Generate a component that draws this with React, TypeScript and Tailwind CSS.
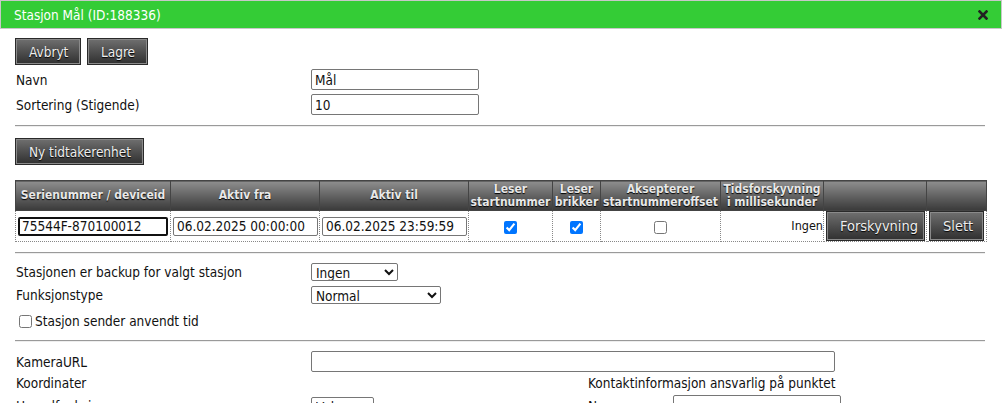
import React from "react";

const font = { fontFamily: '"DejaVu Sans Condensed", "DejaVu Sans", sans-serif' };

function Btn({ children, className = "" }: { children: React.ReactNode; className?: string }) {
  return (
    <button
      className={
        "h-[27px] whitespace-nowrap border border-[#2a2a2a] bg-gradient-to-b from-[#707070] to-[#303030] px-[13px] text-[13.5px] leading-[16px] text-[#eeeeee] [text-shadow:0_1px_1px_#000] shadow-[inset_0_0_0_1px_#8a8a8a] " +
        className
      }
    >
      {children}
    </button>
  );
}

function Hr() {
  return <div className="h-0 border-t border-b border-t-[#9a9a9a] border-b-[#eeeeee] mr-[2px]" />;
}

const th =
  "border border-[#444] bg-gradient-to-b from-[#8e8e8e] to-[#3a3a3a] px-[1px] text-center align-middle text-[12px] font-bold leading-[13px] text-[#e8e8e8] [text-shadow:0_1px_1px_#000] whitespace-nowrap";
const td = "border border-dotted border-[#888] px-[2px] py-0 align-middle leading-[16px]";

export default function App() {
  return (
    <div className="w-[1002px] h-[403px] overflow-hidden bg-white text-[13.5px] leading-[18px] text-[#111]" style={font}>
      <div className="flex h-[29px] items-center justify-between border border-[#c8c8c8] bg-[#34cc36] pl-[13px] pr-[13px]">
        <span className="text-[13.5px] text-white">Stasjon Mål (ID:188336)</span>
        <svg width="10" height="10" viewBox="0 0 10 10" className="mt-[1px]">
          <path d="M1.5 1.5 L8.5 8.5 M8.5 1.5 L1.5 8.5" stroke="#222" strokeWidth="2.6" strokeLinecap="square" />
        </svg>
      </div>

      <div className="pl-[15px] pr-[15px]">
        <div className="mt-[9px] flex gap-[6px]">
          <Btn className="w-[66px] px-0">Avbryt</Btn>
          <Btn className="w-[61px] px-0">Lagre</Btn>
        </div>

        <div className="mt-[4px] flex flex-col gap-[4px]">
          <div className="flex h-[21px] items-center">
            <div className="w-[296px] pl-[1px]">Navn</div>
            <input
              defaultValue="Mål"
              className="h-[21px] w-[168px] rounded-[2px] border border-[#767676] px-[3px] text-[13.5px]"
            />
          </div>
          <div className="flex h-[21px] items-center">
            <div className="w-[296px] pl-[1px]">Sortering (Stigende)</div>
            <input
              defaultValue="10"
              className="h-[21px] w-[168px] rounded-[2px] border border-[#767676] px-[3px] text-[13.5px]"
            />
          </div>
        </div>

        <div className="mt-[10px]">
          <Hr />
        </div>

        <div className="mt-[11px]">
          <Btn className="w-[129px] px-0">Ny tidtakerenhet</Btn>
        </div>

        <table className="mt-[15px] w-[971px] table-fixed border-collapse">
          <colgroup>
            <col className="w-[155px]" />
            <col className="w-[149px]" />
            <col className="w-[149px]" />
            <col className="w-[84px]" />
            <col className="w-[48px]" />
            <col className="w-[120px]" />
            <col className="w-[103px]" />
            <col className="w-[103px]" />
            <col className="w-[60px]" />
          </colgroup>
          <thead>
            <tr className="h-[30px]">
              <th className={th}>Serienummer / deviceid</th>
              <th className={th}>Aktiv fra</th>
              <th className={th}>Aktiv til</th>
              <th className={th}>
                Leser
                <br />
                startnummer
              </th>
              <th className={th}>
                Leser
                <br />
                brikker
              </th>
              <th className={th}>
                Aksepterer
                <br />
                startnummeroffset
              </th>
              <th className={th}>
                Tidsforskyvning
                <br />i millisekunder
              </th>
              <th className={th}></th>
              <th className={th}></th>
            </tr>
          </thead>
          <tbody>
            <tr className="h-[31px]">
              <td className={td}>
                <input
                  defaultValue="75544F-870100012"
                  className="block h-[19px] w-[150px] rounded-[2px] border-2 border-[#111] px-[2px] text-[13.5px] outline-none"
                />
              </td>
              <td className={td}>
                <input
                  defaultValue="06.02.2025 00:00:00"
                  className="block h-[19px] w-[145px] rounded-[2px] border border-[#767676] px-[3px] text-[13.5px]"
                />
              </td>
              <td className={td}>
                <input
                  defaultValue="06.02.2025 23:59:59"
                  className="block h-[19px] w-[145px] rounded-[2px] border border-[#767676] px-[3px] text-[13.5px]"
                />
              </td>
              <td className={td + " text-center"}>
                <input type="checkbox" defaultChecked className="m-0 h-[13px] w-[13px] align-middle" />
              </td>
              <td className={td + " text-center"}>
                <input type="checkbox" defaultChecked className="m-0 h-[13px] w-[13px] align-middle" />
              </td>
              <td className={td + " text-center"}>
                <input type="checkbox" className="m-0 h-[13px] w-[13px] align-middle" />
              </td>
              <td className={td + " text-right text-[12.5px] pr-0"}>Ingen</td>
              <td className={td + " px-[1px] py-0"}>
                <Btn className="block h-[30px] w-[99px] px-0 text-[14.5px]">Forskyvning</Btn>
              </td>
              <td className={td + " px-[1px] py-0"}>
                <Btn className="block h-[30px] w-[55px] px-0 text-[14.5px]">Slett</Btn>
              </td>
            </tr>
          </tbody>
        </table>

        <div className="mt-[10px]">
          <Hr />
        </div>

        <div className="mt-[9px] flex flex-col">
          <div className="flex h-[18px] items-center">
            <div className="w-[296px] pl-[1px]">Stasjonen er backup for valgt stasjon</div>
            <select className="h-[18px] w-[87px] rounded-[2px] border border-[#767676] text-[13.5px] leading-[16px]">
              <option>Ingen</option>
            </select>
          </div>
          <div className="mt-[5px] flex h-[18px] items-center">
            <div className="w-[296px] pl-[1px]">Funksjonstype</div>
            <select className="h-[18px] w-[130px] rounded-[2px] border border-[#767676] text-[13.5px] leading-[16px]">
              <option>Normal</option>
            </select>
          </div>
          <label className="mt-[8px] flex h-[18px] items-center gap-[3px] pl-[4px]">
            <input type="checkbox" className="m-0 h-[13px] w-[13px]" />
            <span>Stasjon sender anvendt tid</span>
          </label>
        </div>

        <div className="mt-[10px]">
          <Hr />
        </div>

        <div className="mt-[9px] flex flex-col">
          <div className="flex h-[21px] items-center">
            <div className="w-[296px] pl-[1px]">KameraURL</div>
            <input className="h-[21px] w-[524px] rounded-[2px] border border-[#767676] px-[3px] text-[13.5px]" />
          </div>
          <div className="flex h-[22px] items-center">
            <div className="w-[573px] pl-[1px]">Koordinater</div>
            <div>Kontaktinformasjon ansvarlig på punktet</div>
          </div>
          <div className="mt-[1px] flex h-[21px] items-center">
            <div className="w-[296px] pl-[1px]">Hovedfunksjon</div>
            <select className="h-[18px] w-[63px] rounded-[2px] border border-[#767676] text-[13.5px] leading-[16px]">
              <option>Velg</option>
            </select>
            <div className="ml-[214px] w-[85px]">Navn</div>
            <input className="h-[21px] w-[168px] rounded-[2px] border border-[#767676] px-[3px] text-[13.5px]" />
          </div>
        </div>
      </div>
    </div>
  );
}
